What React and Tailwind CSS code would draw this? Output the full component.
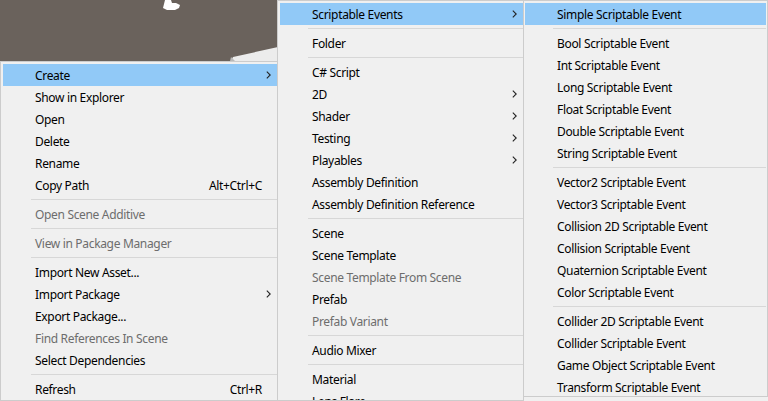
import React from 'react';

const menu1 = [
  { label: 'Create', sub: true, active: true },
  { label: 'Show in Explorer' },
  { label: 'Open' },
  { label: 'Delete' },
  { label: 'Rename' },
  { label: 'Copy Path', shortcut: 'Alt+Ctrl+C' },
  { sep: true },
  { label: 'Open Scene Additive', disabled: true },
  { sep: true },
  { label: 'View in Package Manager', disabled: true },
  { sep: true },
  { label: 'Import New Asset...' },
  { label: 'Import Package', sub: true },
  { label: 'Export Package...' },
  { label: 'Find References In Scene', disabled: true },
  { label: 'Select Dependencies' },
  { sep: true },
  { label: 'Refresh', shortcut: 'Ctrl+R' },
];

const menu2 = [
  { label: 'Scriptable Events', sub: true, active: true },
  { sep: true },
  { label: 'Folder' },
  { sep: true },
  { label: 'C# Script' },
  { label: '2D', sub: true },
  { label: 'Shader', sub: true },
  { label: 'Testing', sub: true },
  { label: 'Playables', sub: true },
  { label: 'Assembly Definition' },
  { label: 'Assembly Definition Reference' },
  { sep: true },
  { label: 'Scene' },
  { label: 'Scene Template' },
  { label: 'Scene Template From Scene', disabled: true },
  { label: 'Prefab' },
  { label: 'Prefab Variant', disabled: true },
  { sep: true },
  { label: 'Audio Mixer' },
  { sep: true },
  { label: 'Material' },
  { label: 'Lens Flare' },
];

const menu3 = [
  { label: 'Simple Scriptable Event', active: true },
  { sep: true },
  { label: 'Bool Scriptable Event' },
  { label: 'Int Scriptable Event' },
  { label: 'Long Scriptable Event' },
  { label: 'Float Scriptable Event' },
  { label: 'Double Scriptable Event' },
  { label: 'String Scriptable Event' },
  { sep: true },
  { label: 'Vector2 Scriptable Event' },
  { label: 'Vector3 Scriptable Event' },
  { label: 'Collision 2D Scriptable Event' },
  { label: 'Collision Scriptable Event' },
  { label: 'Quaternion Scriptable Event' },
  { label: 'Color Scriptable Event' },
  { sep: true },
  { label: 'Collider 2D Scriptable Event' },
  { label: 'Collider Scriptable Event' },
  { label: 'Game Object Scriptable Event' },
  { label: 'Transform Scriptable Event' },
];

const Chevron = () => (
  <svg width="5" height="8" viewBox="0 0 5 8" className="shrink-0">
    <path d="M0.8 0.6 L4.2 4 L0.8 7.4" fill="none" stroke="#222" strokeWidth="1.1" />
  </svg>
);

const MenuItem = ({ item }) => {
  if (item.sep) {
    return (
      <div className="h-[7px] flex items-center pl-[28px]">
        <div className="h-px w-full bg-[#d7d7d7]" />
      </div>
    );
  }
  return (
    <div
      className={`h-[22px] flex items-center pl-[32px] pr-[6px] ${item.active ? 'bg-[#91c9f7]' : ''} ${item.disabled ? 'text-[#6d6d6d]' : 'text-black'}`}
    >
      <span className="flex-1 whitespace-nowrap pt-[2px]">{item.label}</span>
      {item.shortcut && <span className="mr-[9px] whitespace-nowrap pt-[2px]">{item.shortcut}</span>}
      {item.sub && <Chevron />}
    </div>
  );
};

const Menu = ({ items, className }) => (
  <div className={`absolute overflow-hidden bg-[#f0f0f0] border border-[#cccccc] pt-[2px] ${className}`}>
    {items.map((item, i) => (
      <MenuItem key={i} item={item} />
    ))}
  </div>
);

export default function App() {
  return (
    <div
      className="relative w-[768px] h-[401px] overflow-hidden bg-[#f0f0f0] text-[12px] leading-none tracking-[-0.33px]"
      style={{ fontFamily: '"Noto Sans", "Open Sans", sans-serif' }}
    >
      {/* scene view behind the menus */}
      <div className="w-[278px] h-[61px] bg-[#6a625c]">
        <svg width="278" height="61" viewBox="0 0 278 61">
          <path d="M165 0 L171 0 L172 3 L176 3 L180 5 L179 8 L175 10 L167 10 L163 8 L164 4 Z" fill="#ffffff" />
          <path d="M231 61 L233 57 L278 47 L278 61 Z" fill="#ececec" />
          <path d="M230 61 L231 57 L235 61 Z" fill="#b9b9b9" />
        </svg>
      </div>

      <Menu items={menu1} className="left-0 top-[61px] w-[278px] h-[340px] pl-[2px]" />
      <Menu items={menu2} className="left-[277px] top-0 w-[247px] h-[401px] pl-[2px]" />
      <Menu items={menu3} className="left-[523px] top-0 w-[245px] h-[397px] pl-[1px] pr-[1px]" />
    </div>
  );
}
